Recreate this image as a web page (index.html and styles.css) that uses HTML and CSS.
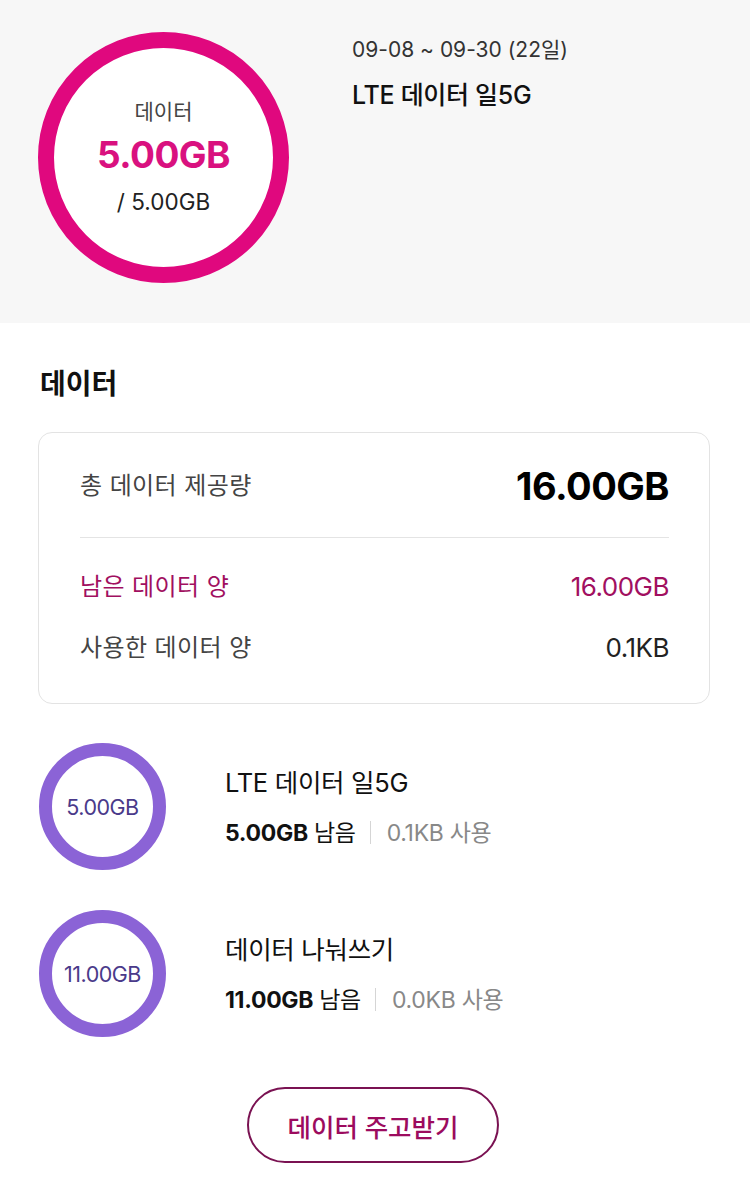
FILE: index.html
```html
<!DOCTYPE html>
<html lang="ko">
<head>
<meta charset="utf-8">
<link rel="stylesheet" href="styles.css">
</head>
<body>
<section class="hero">
  <div class="big-ring">
    <div class="ring-label">데이터</div>
    <div class="ring-value">5.00GB</div>
    <div class="ring-total">/ 5.00GB</div>
  </div>
  <div class="hero-info">
    <div class="period">09-08 ~ 09-30 (22일)</div>
    <div class="plan">LTE 데이터 일5G</div>
  </div>
</section>
<section class="content">
  <h2 class="title">데이터</h2>
  <div class="card">
    <div class="row row-total">
      <span class="label">총 데이터 제공량</span>
      <span class="total">16.00GB</span>
    </div>
    <div class="divider"></div>
    <div class="row row-remain">
      <span class="label">남은 데이터 양</span>
      <span class="val">16.00GB</span>
    </div>
    <div class="row row-used">
      <span class="label">사용한 데이터 양</span>
      <span class="val">0.1KB</span>
    </div>
  </div>
  <div class="items">
    <div class="item">
      <div class="small-ring">5.00GB</div>
      <div class="item-text">
        <div class="item-name">LTE 데이터 일5G</div>
        <div class="item-sub"><b>5.00GB</b> 남음<span class="sep"></span><span class="used">0.1KB 사용</span></div>
      </div>
    </div>
    <div class="item">
      <div class="small-ring">11.00GB</div>
      <div class="item-text">
        <div class="item-name">데이터 나눠쓰기</div>
        <div class="item-sub"><b>11.00GB</b> 남음<span class="sep"></span><span class="used">0.0KB 사용</span></div>
      </div>
    </div>
  </div>
  <div class="btn-wrap">
    <button class="btn">데이터 주고받기</button>
  </div>
</section>
</body>
</html>
```
FILE: styles.css
```css
* { box-sizing: border-box; }
html, body { margin: 0; padding: 0; }
body {
  width: 750px;
  height: 1187px;
  overflow: hidden;
  background: #fff;
  font-family: "Inter", "Noto Sans CJK KR", sans-serif;
  color: #111;
}
.hero {
  height: 323px;
  background: #f7f7f7;
  display: flex;
  padding: 32px 0 0 38px;
}
.big-ring {
  width: 251px;
  height: 251px;
  border: 16px solid #e0087e;
  border-radius: 50%;
  background: #fff;
  display: flex;
  flex-direction: column;
  align-items: center;
  justify-content: center;
}
.ring-label {
  font-size: 21px;
  color: #444;
  line-height: 24px;
}
.ring-value {
  font-size: 37px;
  font-weight: 700;
  color: #d9117f;
  line-height: 40px;
  margin-top: 11px;
  letter-spacing: -0.5px;
}
.ring-total {
  font-size: 22.5px;
  color: #222;
  line-height: 26px;
  margin-top: 14px;
}
.hero-info {
  margin-left: 63px;
  padding-top: 4px;
}
.period {
  font-size: 21px;
  color: #333;
  line-height: 28px;
}
.plan {
  font-size: 25px;
  font-weight: 500;
  color: #111;
  line-height: 30px;
  margin-top: 16px;
  letter-spacing: -0.3px;
}
.content {
  padding: 0 40px 0 38px;
}
.title {
  margin: 0;
  padding: 44px 0 0 2px;
  font-size: 28px;
  font-weight: 700;
  line-height: 34px;
  color: #111;
}
.card {
  margin-top: 31px;
  width: 672px;
  height: 272px;
  border: 1px solid #e3e3e3;
  border-radius: 14px;
  padding: 0 40px 0 41px;
}
.row {
  display: flex;
  justify-content: space-between;
  align-items: center;
}
.label {
  font-size: 24px;
  line-height: 30px;
  color: #444;
  letter-spacing: 0.4px;
}
.row-total { height: 48px; margin-top: 29px; }
.total {
  font-size: 38px;
  font-weight: 700;
  color: #000;
  line-height: 44px;
  letter-spacing: -0.5px;
}
.divider {
  height: 1px;
  background: #e4e4e4;
  margin-top: 27px;
}
.row-remain { height: 40px; margin-top: 29px; }
.row-remain .label, .row-remain .val { color: #a10f60; }
.row-used { height: 40px; margin-top: 21px; }
.val {
  font-size: 26px;
  line-height: 30px;
  color: #222;
  letter-spacing: -0.5px;
}
.items {
  margin-top: 39px;
  display: flex;
  flex-direction: column;
  gap: 40px;
}
.item {
  display: flex;
  align-items: center;
}
.small-ring {
  width: 127px;
  height: 127px;
  border: 13px solid #8b63d6;
  border-radius: 50%;
  margin-left: 1px;
  display: flex;
  align-items: center;
  justify-content: center;
  font-size: 21.5px;
  color: #4a3a8a;
  letter-spacing: -0.5px;
}
.item-text {
  margin-left: 59px;
  margin-top: 0;
}
.item-name {
  font-size: 25.5px;
  color: #111;
  line-height: 30px;
  letter-spacing: -0.3px;
}
.item-sub {
  margin-top: 22px;
  font-size: 23px;
  line-height: 26px;
  color: #111;
  display: flex;
  align-items: center;
  letter-spacing: -0.3px;
}
.item-sub b {
  font-weight: 700;
  margin-right: 6px;
}
.sep {
  display: inline-block;
  width: 1px;
  height: 23px;
  background: #d5d5d5;
  margin: 0 16px 0 14px;
}
.used { color: #888; }
.btn-wrap {
  display: flex;
  justify-content: center;
  margin-top: 50px;
}
.btn {
  width: 252px;
  height: 76px;
  border: 2px solid #7a1252;
  border-radius: 38px;
  background: #fff;
  font-family: "Inter", "Noto Sans CJK KR", sans-serif;
  font-size: 25.5px;
  font-weight: 500;
  color: #9c0b5e;
  margin-left: -2px;
}
```
